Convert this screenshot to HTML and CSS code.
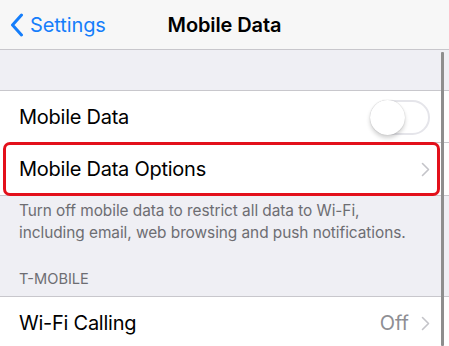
FILE: index.html
```html
<!DOCTYPE html>
<html>
<head>
<meta charset="utf-8">
<link rel="stylesheet" href="styles.css">
</head>
<body>
<div class="screen">
  <header class="nav">
    <div class="back">
      <svg class="back-chev" width="14" height="24" viewBox="0 0 14 24"><path d="M11.5 2 L2.5 12 L11.5 22" fill="none" stroke="#157efb" stroke-width="3" stroke-linecap="round" stroke-linejoin="round"/></svg>
      <span class="back-label">Settings</span>
    </div>
    <div class="title">Mobile Data</div>
  </header>
  <main class="content">
    <div class="band"></div>
    <section class="group">
      <div class="row">
        <span class="label">Mobile Data</span>
        <span class="toggle"><span class="knob"></span></span>
      </div>
      <div class="row row-hl">
        <span class="label">Mobile Data Options</span>
        <svg class="chev" width="9" height="15" viewBox="0 0 9 15"><path d="M1.5 1.5 L7.5 7.5 L1.5 13.5" fill="none" stroke="#c4c4c9" stroke-width="1.6" stroke-linecap="round" stroke-linejoin="round"/></svg>
        <span class="highlight"></span>
      </div>
    </section>
    <p class="footer">Turn off mobile data to restrict all data to Wi-Fi,<br>including email, web browsing and push notifications.</p>
    <div class="header">T-MOBILE</div>
    <section class="group">
      <div class="row">
        <span class="label">Wi-Fi Calling</span>
        <span class="value">Off</span>
        <svg class="chev" width="9" height="15" viewBox="0 0 9 15"><path d="M1.5 1.5 L7.5 7.5 L1.5 13.5" fill="none" stroke="#c4c4c9" stroke-width="1.6" stroke-linecap="round" stroke-linejoin="round"/></svg>
      </div>
    </section>
    <span class="scrollbar"></span>
  </main>
</div>
</body>
</html>
```
FILE: styles.css
```css
* { box-sizing: border-box; }
html, body { margin: 0; padding: 0; }
body {
  width: 449px;
  height: 346px;
  overflow: hidden;
  background: #efeff4;
  font-family: Inter, "Noto Sans", sans-serif;
  -webkit-font-smoothing: antialiased;
}
.screen { width: 449px; height: 346px; display: flex; flex-direction: column; overflow: hidden; }
.nav {
  height: 50px;
  flex: none;
  background: #f7f7f7;
  border-bottom: 1px solid #c8c7cc;
  display: grid;
  grid-template-columns: 1fr auto 1fr;
  align-items: center;
  padding: 0 0 0 10px;
}
.back { display: flex; align-items: center; gap: 6px; }
.back-chev { display: block; margin-top: 1px; }
.back-label { color: #157efb; font-size: 20px; letter-spacing: -0.1px; }
.title { font-size: 20px; font-weight: 600; color: #000; letter-spacing: -0.1px; padding-right: 10px; }
.content { position: relative; flex: 1; min-height: 0; }
.band { height: 41px; border-bottom: 1px solid #c8c7cc; }
.group { background: #fff; border-bottom: 1px solid #c8c7cc; }
.header + .group { border-top: 1px solid #c8c7cc; }
.row {
  position: relative;
  height: 52px;
  display: flex;
  align-items: center;
  padding: 0 19px 0 19px;
  gap: 8px;
}
.row + .row::before {
  content: "";
  position: absolute;
  left: 19px; right: 0; top: -1px;
  border-top: 1px solid #c8c7cc;
}
.label { flex: 1; font-size: 20px; color: #000; letter-spacing: -0.25px; }
.value { font-size: 20px; color: #8e8e93; margin-right: 4px; }
.chev { display: block; flex: none; }
.toggle {
  width: 60px; height: 35px;
  border-radius: 18px;
  border: 2px solid #e5e5ea;
  background: #fff;
  position: relative;
}
.knob {
  position: absolute;
  left: -2px; top: -2px;
  width: 35px; height: 35px;
  border-radius: 50%;
  background: #fff;
  box-shadow: 0 3px 4px rgba(0,0,0,0.18), 0 0 1px rgba(0,0,0,0.25);
}
.highlight {
  position: absolute;
  left: 3px; right: 9px; top: -1px; bottom: -1px;
  border: 3px solid #e3101b;
  border-radius: 7px;
  pointer-events: none;
}
.footer {
  margin: 0;
  padding: 4px 19px 0;
  font-size: 15.4px;
  line-height: 22px;
  color: #6d6d72;
  letter-spacing: -0.05px;
}
.header {
  padding: 25px 19px 0;
  height: 52px;
  font-size: 14.6px;
  line-height: 20px;
  color: #6d6d72;
}
.scrollbar {
  position: absolute;
  left: 441px; top: 2px; bottom: 0;
  width: 3px;
  background: #8e8e8e;
  border-radius: 1px;
}
```
